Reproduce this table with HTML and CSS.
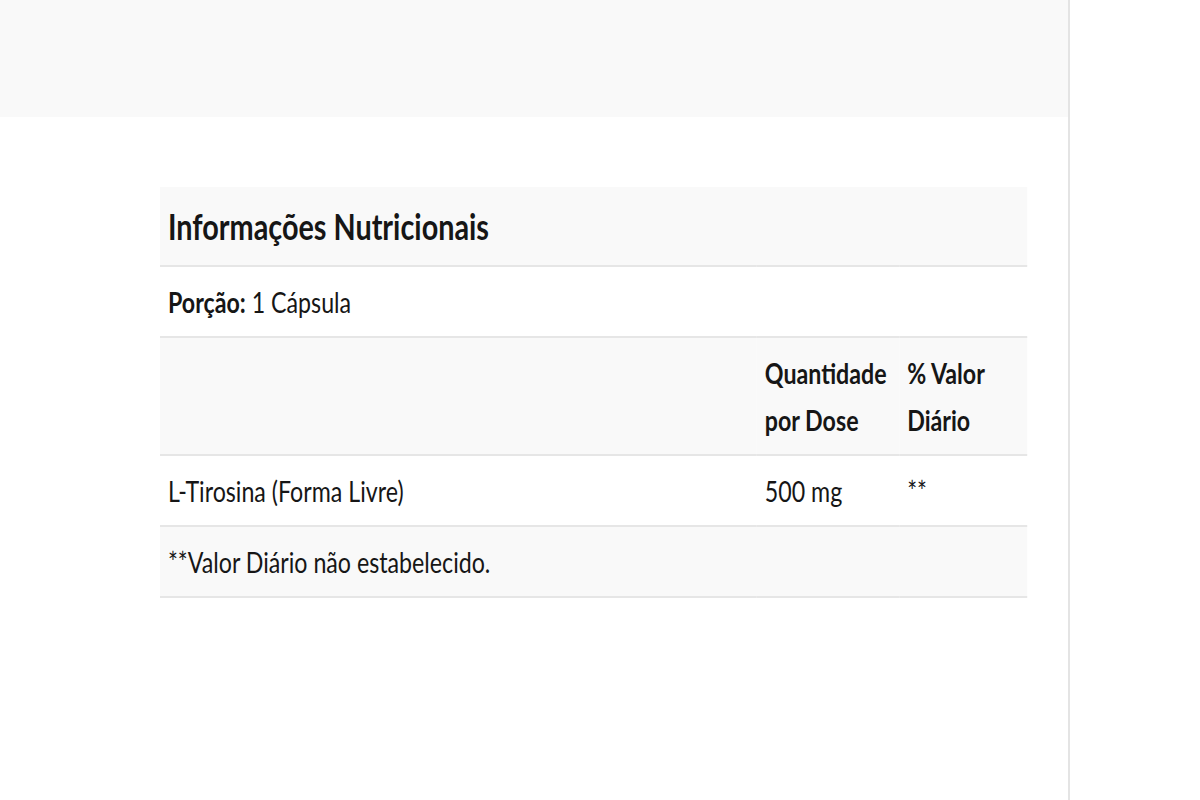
FILE: index.html
```html
<!DOCTYPE html>
<html lang="pt">
<head>
<meta charset="utf-8">
<title>Informações Nutricionais</title>
<link rel="stylesheet" href="styles.css">
</head>
<body>
<div class="page">
  <main class="main">
    <div class="band"></div>
    <section class="content">
      <div class="squeeze">
        <table class="nutri">
          <colgroup>
            <col class="c1"><col class="c2"><col class="c3">
          </colgroup>
          <thead>
            <tr class="shade"><th colspan="3" class="title">Informações Nutricionais</th></tr>
          </thead>
          <tbody>
            <tr><td colspan="3"><b>Porção:</b> 1 Cápsula</td></tr>
            <tr class="shade"><td></td><th>Quantidade por Dose</th><th>% Valor Diário</th></tr>
            <tr><td>L-Tirosina (Forma Livre)</td><td>500 mg</td><td class="top">**</td></tr>
            <tr class="shade"><td colspan="3">**Valor Diário não estabelecido.</td></tr>
          </tbody>
        </table>
      </div>
    </section>
  </main>
  <aside class="side"></aside>
</div>
</body>
</html>
```

FILE: styles.css
```css
* { box-sizing: border-box; }
html, body { margin: 0; padding: 0; background: #fff; }
body { font-family: Lato, "Open Sans", sans-serif; color: #161616; }
.page { display: flex; width: 1200px; height: 800px; overflow: hidden; }
.main { width: 1070px; border-right: 2px solid #e4e4e4; }
.side { flex: 1; background: #fff; }
.band { height: 117px; background: #f9f9f9; }
.content { padding: 70px 0 0 160px; }
.squeeze { width: 1084px; transform: scaleX(0.8); transform-origin: left top; }
.nutri { width: 1084px; border-collapse: collapse; table-layout: fixed; }
.c1 { width: 746px; }
.c2 { width: 178px; }
.c3 { width: 160px; }
.nutri th, .nutri td {
  text-align: left; vertical-align: top;
  padding: 11px 10px; font-size: 29px; line-height: 47px;
  border-bottom: 2px solid #e6e6e6;
}
.nutri th { font-weight: 700; }
.nutri td b { font-weight: 700; }
.nutri .title { font-size: 36px; line-height: 54px; padding: 12px 10px; }
.shade { background: #f9f9f9; }
.top { font-size: 23px; }
```
